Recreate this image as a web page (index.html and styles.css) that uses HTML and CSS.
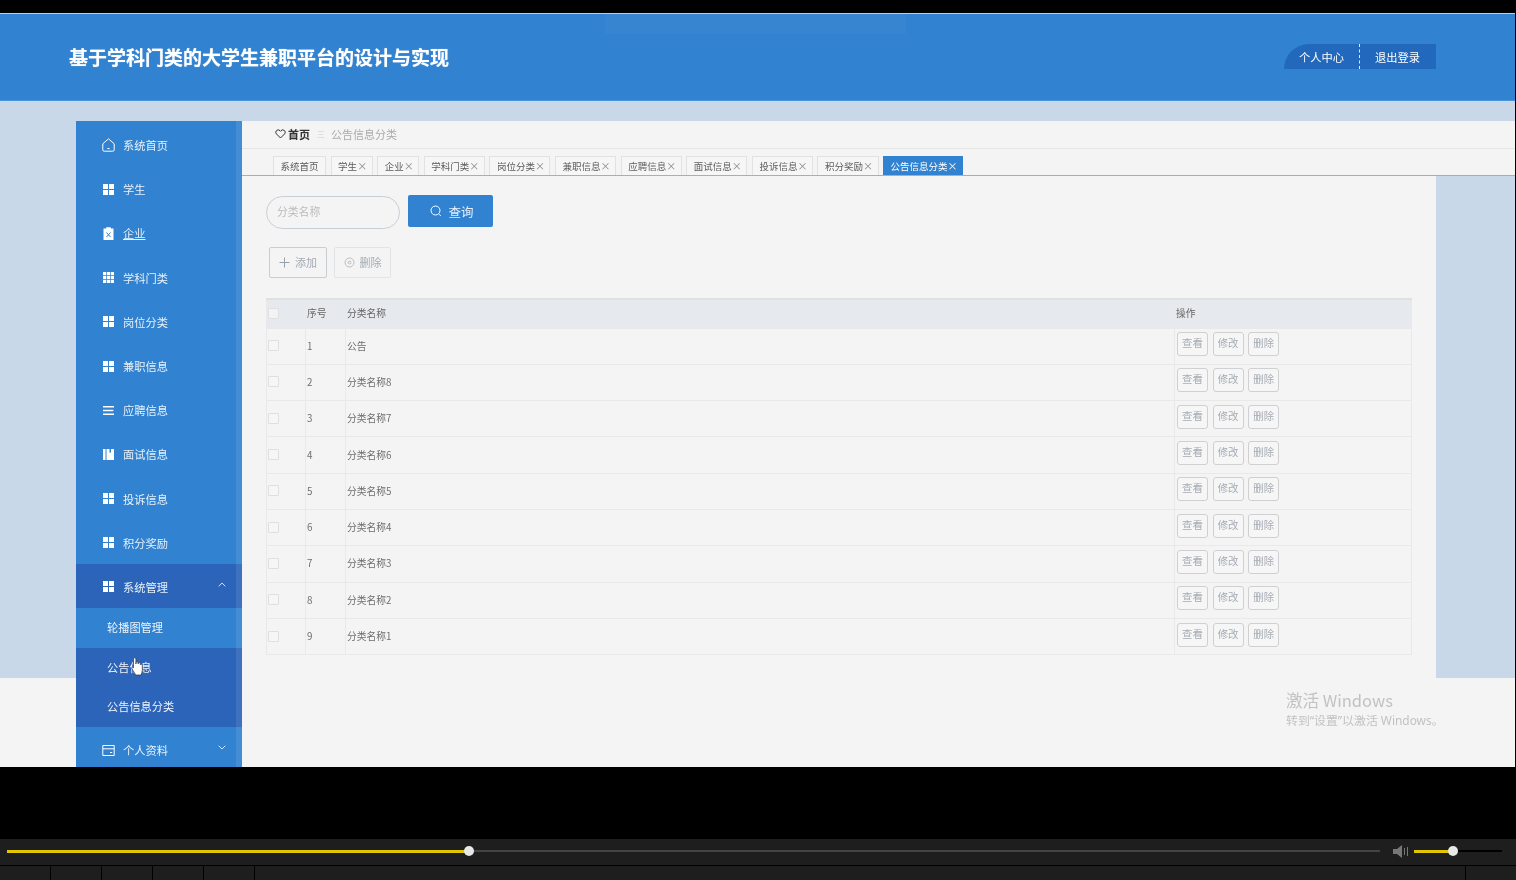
FILE: index.html
```html
<!DOCTYPE html>
<html lang="zh-CN">
    <head>
        <title>公告信息分类</title>
        <meta charset="utf-8">
        <link rel="stylesheet" href="styles.css">
    </head>

    <body>
        <svg class="defs" width="0" height="0">
            <symbol id="i-grid" viewBox="0 0 13 13"><path fill="#fff" d="M1 1h5v5H1zM7 1h5v5H7zM1 7h5v5H1zM7 7h5v5H7z"/></symbol>
        </svg>

        <div class="screen">
            <div class="video-hint"></div>
            <header class="top">
                <div class="title">基于学科门类的大学生兼职平台的设计与实现</div>
                <nav class="user-nav">
                    <a class="user-link first">个人中心</a>
                    <a class="user-link">退出登录</a>
                </nav>
            </header>

            <div class="shell">
                <aside class="side">
                    <div class="side-strip"></div>
                    <div class="item">
                        <svg class="ico ico-home" viewBox="0 0 13 14"><path fill="none" stroke="#fff" d="M.8 5.800 6.500.8l5.700 5v6a1.400 1.400 0 0 1-1.400 1.400H2.200A1.400 1.400 0 0 1 .8 11.800zM5.300 10.600h2.400"/></svg>
                        <span>系统首页</span>
                    </div>
                    <div class="item"><svg class="ico"><use href="#i-grid"/></svg><span>学生</span></div>
                    <div class="item">
                        <svg class="ico" viewBox="0 0 13 13"><path fill="#fff" d="M1.500 1.500h2.700V.3h4.600v1.200h2.700V13h-10z"/><path stroke="#3182d0" d="M4.500 5.500l4 4.500M8.500 5.500l-4 4.500"/></svg>
                        <span class="under">企业</span>
                    </div>
                    <div class="item">
                        <svg class="ico" viewBox="0 0 13 13"><path fill="#fff" d="M1 1h3.200v3.200H1zM4.900 1h3.200v3.200H4.900zM8.800 1H12v3.200H8.800zM1 4.900h3.200v3.200H1zM4.900 4.900h3.200v3.200H4.900zM8.800 4.900H12v3.200H8.800zM1 8.800h3.200V12H1zM4.900 8.800h3.200V12H4.900zM8.800 8.800H12V12H8.800z"/></svg>
                        <span>学科门类</span>
                    </div>
                    <div class="item"><svg class="ico"><use href="#i-grid"/></svg><span>岗位分类</span></div>
                    <div class="item"><svg class="ico"><use href="#i-grid"/></svg><span>兼职信息</span></div>
                    <div class="item">
                        <svg class="ico" viewBox="0 0 13 13"><path fill="#fff" d="M1 2h11v1.600H1zM1 5.700h9.500l1.500.8-1.500.8H1zM1 9.400h11V11H1z"/></svg>
                        <span>应聘信息</span>
                    </div>
                    <div class="item">
                        <svg class="ico" viewBox="0 0 13 13"><path fill="#fff" d="M1 1h2.500v11H1zM4.500 1h3v4l.7-.7.8.7V1H12v11H4.500z"/></svg>
                        <span>面试信息</span>
                    </div>
                    <div class="item"><svg class="ico"><use href="#i-grid"/></svg><span>投诉信息</span></div>
                    <div class="item"><svg class="ico"><use href="#i-grid"/></svg><span>积分奖励</span></div>
                    <div class="item open">
                        <svg class="ico"><use href="#i-grid"/></svg><span>系统管理</span>
                        <svg class="arrow" viewBox="0 0 8 5"><path fill="none" stroke="#fff" stroke-width=".8" d="M.7 4.300 4 1l3.300 3.300"/></svg>
                    </div>
                    <div class="sub">轮播图管理</div>
                    <div class="sub dark">公告信息</div>
                    <div class="sub dark">公告信息分类</div>
                    <div class="item">
                        <svg class="ico" viewBox="0 0 13 13"><path fill="none" stroke="#fff" d="M.8 1.500h11.400v10H.8zM.8 4.800h11.400M8 8.500h2.200"/></svg>
                        <span>个人资料</span>
                        <svg class="arrow" viewBox="0 0 8 5"><path fill="none" stroke="#fff" stroke-width=".8" d="M.7.700 4 4l3.300-3.300"/></svg>
                    </div>
                </aside>

                <main class="main">
                    <div class="crumbs">
                        <svg class="heart" viewBox="0 0 11 10"><path fill="none" stroke="#333" d="M5.500 9 1.400 4.900A2.400 2.400 0 0 1 5 1.700l.5.600.5-.6a2.400 2.400 0 0 1 3.600 3.200z"/></svg>
                        <b class="crumb-home">首页</b>
                        <span class="crumb-sep">三</span>
                        <span class="crumb-now">公告信息分类</span>
                    </div>

                    <div class="tabs">
                        <div class="tab">系统首页</div>
                        <div class="tab">学生<i>×</i></div>
                        <div class="tab">企业<i>×</i></div>
                        <div class="tab">学科门类<i>×</i></div>
                        <div class="tab">岗位分类<i>×</i></div>
                        <div class="tab">兼职信息<i>×</i></div>
                        <div class="tab">应聘信息<i>×</i></div>
                        <div class="tab">面试信息<i>×</i></div>
                        <div class="tab">投诉信息<i>×</i></div>
                        <div class="tab">积分奖励<i>×</i></div>
                        <div class="tab active">公告信息分类<i>×</i></div>
                    </div>

                    <div class="panel">
                        <div class="search">
                            <div class="search-input">分类名称</div>
                            <div class="search-btn">
                                <svg class="search-ico" viewBox="0 0 12 12"><path fill="none" stroke="#fff" d="M9 9.200 10.800 11M10 5.500a4.500 4.500 0 1 1-9 0 4.500 4.500 0 0 1 9 0z"/></svg>
                                查询
                            </div>
                        </div>

                        <div class="actions">
                            <div class="act add">
                                <svg class="act-ico" viewBox="0 0 11 11"><path fill="none" stroke="#98a2ad" d="M5.500.5v10M.5 5.500h10"/></svg>
                                添加
                            </div>
                            <div class="act del">
                                <svg class="act-ico" viewBox="0 0 11 11"><circle cx="5.500" cy="5.500" r="4.500" fill="none" stroke="#a8b0b8" stroke-width=".8"/><circle cx="5.500" cy="5.500" r="1.400" fill="none" stroke="#a8b0b8" stroke-width=".8"/></svg>
                                删除
                            </div>
                        </div>

                        <table class="grid">
                            <colgroup>
                                <col class="c-check">
                                <col class="c-num">
                                <col>
                                <col class="c-ops">
                            </colgroup>
                            <thead>
                                <tr><th><div class="box"></div></th><th>序号</th><th>分类名称</th><th>操作</th></tr>
                            </thead>
                            <tbody>
                                <tr><td><div class="box"></div></td><td>1</td><td>公告</td><td class="ops"><div class="btn">查看</div><div class="btn">修改</div><div class="btn">删除</div></td></tr>
                                <tr><td><div class="box"></div></td><td>2</td><td>分类名称8</td><td class="ops"><div class="btn">查看</div><div class="btn">修改</div><div class="btn">删除</div></td></tr>
                                <tr><td><div class="box"></div></td><td>3</td><td>分类名称7</td><td class="ops"><div class="btn">查看</div><div class="btn">修改</div><div class="btn">删除</div></td></tr>
                                <tr><td><div class="box"></div></td><td>4</td><td>分类名称6</td><td class="ops"><div class="btn">查看</div><div class="btn">修改</div><div class="btn">删除</div></td></tr>
                                <tr><td><div class="box"></div></td><td>5</td><td>分类名称5</td><td class="ops"><div class="btn">查看</div><div class="btn">修改</div><div class="btn">删除</div></td></tr>
                                <tr><td><div class="box"></div></td><td>6</td><td>分类名称4</td><td class="ops"><div class="btn">查看</div><div class="btn">修改</div><div class="btn">删除</div></td></tr>
                                <tr><td><div class="box"></div></td><td>7</td><td>分类名称3</td><td class="ops"><div class="btn">查看</div><div class="btn">修改</div><div class="btn">删除</div></td></tr>
                                <tr><td><div class="box"></div></td><td>8</td><td>分类名称2</td><td class="ops"><div class="btn">查看</div><div class="btn">修改</div><div class="btn">删除</div></td></tr>
                                <tr><td><div class="box"></div></td><td>9</td><td>分类名称1</td><td class="ops"><div class="btn">查看</div><div class="btn">修改</div><div class="btn">删除</div></td></tr>
                            </tbody>
                        </table>
                    </div>
                </main>
            </div>

            <div class="watermark">
                <div class="wm-big">激活 Windows</div>
                <div class="wm-small">转到“设置”以激活 Windows。</div>
            </div>

            <svg class="cursor" viewBox="0 0 12 19"><path fill="#fff" stroke="#333" stroke-width=".7" d="M2.500 2c0-1.600 2.400-1.600 2.400 0v5l.1-1.200c.3-1.300 2.100-1.200 2.200 0V7l.1-.6c.3-1.200 2-1 2.100.2v1.200c.3-1 1.900-.8 1.900.5v4.700c0 2-.8 3-1.200 5H4.500c-.5-1.800-2-3.500-3.400-6C.3 10.500 1.200 9.500 2.500 10.700z"/></svg>
        </div>

        <div class="gap"></div>

        <footer class="player">
            <div class="bar">
                <div class="track">
                    <div class="fill" style="width: 462px"></div>
                    <div class="thumb" style="left: 462px"></div>
                </div>
                <svg class="speaker" viewBox="0 0 15 13"><path fill="#777" d="M0 4h4l5-4v13L4 9H0z"/><path stroke="#777" d="M11.500 3v7M14.500 2v9"/></svg>
                <div class="volume">
                    <div class="vol-fill" style="width: 39px"></div>
                    <div class="thumb" style="left: 39px"></div>
                </div>
            </div>
            <div class="cells">
                <div class="cell"></div>
                <div class="cell"></div>
                <div class="cell"></div>
                <div class="cell"></div>
                <div class="cell"></div>
                <div class="cell wide"></div>
            </div>
        </footer>
    </body>
</html>
```

FILE: styles.css
```css
* {
    box-sizing: border-box;
}
html, body {
    margin: 0;
    height: 880px;
    overflow: hidden;
    background: #000;
}
body {
    padding-top: 13px;
    font-family: "Noto Sans CJK SC", "Noto Sans", sans-serif;
    color: #666;
}
.defs {
    display: block;
    height: 0;
}
.screen {
    position: relative;
    width: 1515px;
    height: 754px;
    overflow: hidden;
    background: linear-gradient(#c9d8e8 665px, #f4f4f4 665px);
    filter: blur(.35px);
}
.video-hint {
    position: absolute;
    left: 605px;
    top: 1px;
    width: 301px;
    height: 20px;
    background: rgba(255,255,255,0.03);
}

/* header */
.top {
    display: flex;
    align-items: center;
    justify-content: space-between;
    height: 88px;
    padding: 0 79px 0 69px;
    background: #3182d0;
    border-top: 1px solid #c8ccd0;
    border-bottom: 1px solid #4a94da;
}
.title {
    margin-top: -2px;
    font-size: 19px;
    font-weight: bold;
    color: #fff;
    text-shadow: 0 0 1px rgba(255,255,255,0.6);
}
.user-nav {
    display: flex;
    height: 25px;
    margin-top: -1px;
    background: #2268bc;
    border-radius: 26px 0 0 0;
}
.user-link {
    width: 76px;
    padding-left: 15px;
    font-size: 11.25px;
    line-height: 26px;
    color: #fff;
}
.user-link.first {
    border-right: 1px dashed #dfe9f5;
}

/* sidebar + main */
.shell {
    display: flex;
    height: 666px;
    padding: 20px 0 0 76px;
}
.side {
    position: relative;
    flex: none;
    width: 166px;
    padding-top: 1px;
    background: #3182d0;
    overflow: hidden;
}
.side-strip {
    position: absolute;
    top: 0;
    right: 0;
    bottom: 0;
    width: 6px;
    background: rgba(255,255,255,0.09);
}
.item {
    display: flex;
    align-items: center;
    gap: 8px;
    height: 44.2px;
    padding: 2px 0 0 26px;
    font-size: 11.25px;
    color: #e8f1fa;
}
.item.open {
    background: #2b64b8;
}
.ico {
    width: 13px;
    height: 13px;
    flex: none;
}
.ico.ico-home {
    height: 14px;
}
.under {
    text-decoration: underline;
}
.arrow {
    width: 8px;
    height: 5px;
    margin-left: auto;
    margin-right: 16px;
    margin-top: -5px;
}
.sub {
    height: 39.7px;
    padding-left: 31px;
    font-size: 11.2px;
    line-height: 39px;
    color: #eef4fb;
}
.sub.dark {
    background: #2b64b8;
}
.main {
    display: flex;
    flex-direction: column;
    flex: 1;
}
.crumbs {
    display: flex;
    align-items: center;
    height: 28px;
    padding: 0 0 2px 33px;
    background: #f4f4f4;
    border-bottom: 1px solid #e6e6e6;
    font-size: 11px;
}
.heart {
    width: 11px;
    height: 10px;
    margin-right: 2px;
}
.crumb-home {
    color: #333;
}
.crumb-sep {
    margin: 0 6px 0 7px;
    color: #ccc;
    font-size: 8px;
}
.crumb-now {
    color: #aaa;
}
.tabs {
    display: flex;
    align-items: flex-end;
    gap: 4.6px;
    height: 27px;
    padding-left: 31px;
    background: #f4f4f4;
    border-bottom: 1px solid #9fb0c5;
}
.tab {
    height: 19px;
    padding: 0 6.500px;
    background: #f6f6f6;
    border: 1px solid #e2e2e2;
    border-bottom: 0;
    font-size: 9.5px;
    line-height: 18px;
    color: #5c5c5c;
    white-space: nowrap;
}
.tab i {
    display: inline-block;
    width: 8px;
    font-style: normal;
    font-size: 10px;
    text-align: center;
    color: #888;
}
.tab.active {
    background: #3182d0;
    border-color: #3182d0;
    color: #fff;
}
.tab.active i {
    color: #fff;
}

/* content */
.panel {
    flex: 1;
    width: 1194px;
    padding: 19px 24px 0;
    background: #f4f4f4;
}
.search {
    display: flex;
    gap: 8px;
}
.search-input {
    width: 134px;
    height: 33px;
    margin-top: 1px;
    padding-left: 10px;
    border: 1.500px solid #c8ced6;
    border-radius: 17px;
    font-size: 10.8px;
    line-height: 29px;
    color: #bbb;
}
.search-btn {
    display: flex;
    align-items: center;
    justify-content: center;
    gap: 6px;
    width: 85px;
    height: 32px;
    padding-left: 3px;
    background: #3182d0;
    border-radius: 2px;
    font-size: 12.5px;
    color: #e6f0fa;
}
.search-ico {
    width: 12px;
    height: 12px;
}
.actions {
    display: flex;
    gap: 7px;
    margin: 18px 0 0 3px;
}
.act {
    display: flex;
    align-items: center;
    justify-content: center;
    gap: 5px;
    height: 31px;
    padding-bottom: 1px;
    border: 1.500px solid #d4d8dc;
    border-radius: 2px;
    font-size: 11px;
    color: #a4abb3;
}
.add {
    width: 58px;
    border-color: #c8cdd2;
}
.del {
    width: 57px;
    border-color: #e2e4e7;
}
.act-ico {
    width: 11px;
    height: 11px;
}
.grid {
    width: 1146px;
    margin-top: 20px;
    border-collapse: collapse;
    table-layout: fixed;
    font-size: 9.75px;
}
.c-check {
    width: 39px;
}
.c-num {
    width: 40px;
}
.c-ops {
    width: 237px;
}
.grid th, .grid td {
    padding: 0 0 0 1px;
    border: 1px solid #e9e9e9;
    text-align: left;
    font-weight: normal;
    color: #6e6e6e;
}
.grid th {
    height: 29px;
    padding-bottom: 1px;
    background: #e6e9ed;
    border-top: 2px solid #e0e0e0;
    color: #666;
}
.grid td {
    height: 36.3px;
    padding-bottom: 1px;
}
.box {
    width: 11px;
    height: 11px;
    background: #f6f6f6;
    border: 1px solid #dfdfdf;
    border-radius: 1px;
}
.grid th .box {
    background: #f2f3f5;
}
.grid td.ops {
    padding: 0 0 4px 2px;
}
.btn {
    display: inline-block;
    width: 31px;
    height: 24px;
    margin-right: 4.600px;
    border: 1.500px solid #d0d0d3;
    border-radius: 3px;
    background: #f6f6f6;
    font-size: 10.4px;
    line-height: 20px;
    text-align: center;
    color: #a6acb4;
    vertical-align: middle;
}

/* overlays */
.watermark {
    position: absolute;
    left: 1286px;
    top: 676px;
    color: #c2c2c2;
    white-space: nowrap;
}
.wm-big {
    font-size: 16.500px;
    line-height: 22px;
}
.wm-small {
    font-family: "Noto Sans", "Noto Sans CJK SC", sans-serif;
    font-size: 11.9px;
    line-height: 18px;
}
.cursor {
    position: absolute;
    left: 131px;
    top: 644px;
    width: 12px;
    height: 19px;
}

/* video player */
.gap {
    height: 72px;
}
.player {
    height: 41px;
    background: #1e1e1e;
}
.bar {
    display: flex;
    align-items: center;
    height: 26px;
    padding: 0 0 2px 7px;
}
.track {
    position: relative;
    width: 1373px;
    height: 2px;
    background: #444;
}
.fill, .vol-fill {
    height: 3px;
    background: #e2c500;
}
.thumb {
    position: absolute;
    top: 50%;
    width: 10px;
    height: 10px;
    margin: -5px 0 0 -5px;
    background: #e8e8e8;
    border-radius: 50%;
}
.speaker {
    width: 15px;
    height: 13px;
    margin-left: 13px;
}
.volume {
    position: relative;
    width: 88px;
    height: 2px;
    margin-left: 6px;
    background: #000;
}
.cells {
    display: flex;
    height: 15px;
    border-top: 1px solid #000;
}
.cell {
    width: 51px;
    border-right: 1px solid #000;
}
.cell.wide {
    width: 1211px;
}
```
